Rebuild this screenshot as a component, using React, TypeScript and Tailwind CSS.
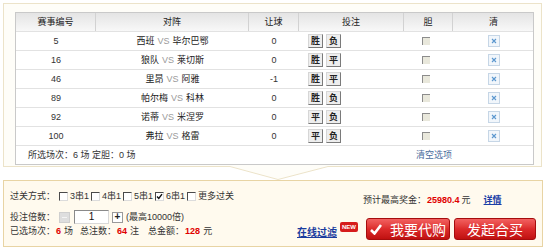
import React from "react";

const matches = [
  { id: "5", home: "西班", away: "毕尔巴鄂", rq: "0", picks: ["胜", "负"] },
  { id: "16", home: "狼队", away: "莱切斯", rq: "0", picks: ["胜", "平"] },
  { id: "46", home: "里昂", away: "阿雅", rq: "-1", picks: ["胜", "平"] },
  { id: "89", home: "帕尔梅", away: "科林", rq: "0", picks: ["胜", "负"] },
  { id: "92", home: "诺蒂", away: "米涅罗", rq: "0", picks: ["平", "负"] },
  { id: "100", home: "弗拉", away: "格雷", rq: "0", picks: ["平", "负"] },
];

const cols = "grid grid-cols-[80px_153px_50px_105px_49px_81px]";

// old style sunken checkbox
const OldCheck = ({ checked = false }: { checked?: boolean }) => (
  <span className="inline-flex w-[9px] h-[9px] items-center justify-center bg-white border border-t-[#4a4a4a] border-l-[#4a4a4a] border-r-[#dcdcdc] border-b-[#dcdcdc]">
    {checked && (
      <svg width="7" height="7" viewBox="0 0 7 7">
        <path d="M1 3.5 L2.8 5.5 L6 1.2" fill="none" stroke="#111" strokeWidth="1.4" />
      </svg>
    )}
  </span>
);

const App = () => {
  return (
    <div className="w-[550px] h-[248px] bg-white overflow-hidden pt-[3px] text-[9px] leading-[12px] text-[#333] font-['Liberation_Sans','Noto_Sans_CJK_SC',sans-serif]">
      {/* top panel */}
      <div className="ml-[3px] w-[539px] h-[163px] border border-b-0 border-[#ece3c9] bg-[#fefdf8] pl-[11px] pt-[8px]">
        <div className="w-[519px] border border-[#c9c9c9] bg-white">
          {/* header */}
          <div className={`${cols} h-[18px] bg-linear-to-b from-[#e4e4e4] to-[#f8f8f8] text-[#222]`}>
            {["赛事编号", "对阵", "让球", "投注", "胆", "清"].map((h, i) => (
              <div
                key={h}
                className={`flex items-center justify-center ${i < 5 ? "border-r border-[#d2d2d2]" : ""}`}
              >
                {h}
              </div>
            ))}
          </div>

          {/* rows */}
          {matches.map((m) => (
            <div key={m.id} className={`${cols} h-[19px] border-t border-[#e2e2e2]`}>
              <div className="flex items-center justify-center">{m.id}</div>
              <div className="flex items-center justify-center gap-[3px] text-[#222]">
                <span>{m.home}</span>
                <span className="text-[#9a9a9a]">VS</span>
                <span>{m.away}</span>
              </div>
              <div className="flex items-center justify-center">{m.rq}</div>
              <div className="flex items-center gap-[3px] pl-[9px]">
                {m.picks.map((p) => (
                  <span
                    key={p}
                    className="w-[15px] h-[14px] flex items-center justify-center bg-[#eeeeee] border border-t-[#d6d6d6] border-l-[#d6d6d6] border-r-[#7a7a7a] border-b-[#7a7a7a] text-[#222] font-bold"
                  >
                    {p}
                  </span>
                ))}
              </div>
              <div className="flex items-center pl-[18px]">
                <span className="w-[8px] h-[8px] bg-[#e9e8dc] border-t border-l border-[#8c8c8c]" />
              </div>
              <div className="flex items-center justify-center">
                <span className="w-[12px] h-[12px] flex items-center justify-center bg-[#f1f6fb] border border-[#c6d6e6]">
                  <svg width="6" height="6" viewBox="0 0 6 6">
                    <path d="M1 1 L5 5 M5 1 L1 5" stroke="#5b97cf" strokeWidth="1.1" />
                  </svg>
                </span>
              </div>
            </div>
          ))}

          {/* summary */}
          <div className="flex items-center h-[19px] border-t border-[#e2e2e2]">
            <div className="w-[400px] pl-[12px] text-[#333]">所选场次：6 场 定胆：0 场</div>
            <span className="text-[#4a6c9c]">清空选项</span>
          </div>
        </div>
      </div>

      {/* pointer joining the panels */}
      <svg width="539" height="14" viewBox="0 0 539 14" className="ml-[3px] block">
        <polygon points="227,0 275,13.5 325,0" fill="#fefdf8" />
        <polyline
          points="0,0.5 227,0.5 275,13.5 325,0.5 539,0.5"
          fill="none"
          stroke="#ece3c9"
          strokeWidth="1"
        />
      </svg>

      {/* bottom box */}
      <div className="ml-[3px] w-[540px] h-[67px] border border-[#e8d4a4] bg-[#fffaee] flex">
        <div className="w-[293px] pl-[6px] pt-[9px]">
          <div className="flex items-center h-[12px] gap-[1px]">
            <span className="mr-[3px]">过关方式：</span>
            <OldCheck />
            <span className="w-[20px] ml-[1px]">3串1</span>
            <OldCheck />
            <span className="w-[20px] ml-[1px]">4串1</span>
            <OldCheck />
            <span className="w-[20px] ml-[1px]">5串1</span>
            <OldCheck checked />
            <span className="w-[20px] ml-[1px]">6串1</span>
            <OldCheck />
            <span className="ml-[1px]">更多过关</span>
          </div>

          <div className="flex items-center h-[14px] mt-[8px]">
            <span className="mr-[4px]">投注倍数：</span>
            <span className="w-[11px] h-[11px] flex items-center justify-center bg-[#dedede] border border-[#cfcfcf]">
              <span className="w-[5px] h-[1px] bg-[#f4f4f4]" />
            </span>
            <span className="ml-[4px] w-[35px] h-[14px] flex items-center justify-center bg-white border border-t-[#8a8a8a] border-l-[#8a8a8a] border-r-[#d8d8d8] border-b-[#d8d8d8] text-[10px] text-[#111]">
              1
            </span>
            <span className="ml-[3px] w-[11px] h-[11px] flex items-center justify-center bg-white border border-[#9a9a9a] text-[#222] font-bold text-[10px] leading-none">
              +
            </span>
            <span className="ml-[3px]">(最高10000倍)</span>
          </div>

          <div className="flex items-center h-[12px] mt-[1px]">
            <span>已选场次：</span>
            <span className="text-[#e00000] font-bold ml-[1px]">6</span>
            <span className="ml-[3px]">场</span>
            <span className="ml-[7px]">总注数：</span>
            <span className="text-[#e00000] font-bold ml-[1px]">64</span>
            <span className="ml-[3px]">注</span>
            <span className="ml-[9px]">总金额：</span>
            <span className="text-[#e00000] font-bold ml-[1px]">128</span>
            <span className="ml-[3px]">元</span>
          </div>
        </div>

        <div className="flex-1 pt-[13px]">
          <div className="flex items-center h-[12px] pl-[66px]">
            <span>预计最高奖金：</span>
            <span className="text-[#e00000] font-bold ml-[1px]">25980.4</span>
            <span className="ml-[2px]">元</span>
            <span className="ml-[13px] font-bold text-[#1b3ea6] underline">详情</span>
          </div>

          <div className="flex items-center h-[22px] mt-[12px]">
            <span className="mt-[8px] text-[10px] font-bold text-[#1a3c9e] underline">在线过滤</span>
            <span className="relative ml-[3px] -mt-[4px] h-[10px] px-[2px] flex items-center rounded-[2px] bg-[#d61c1c] text-white text-[6px] font-bold leading-none">
              NEW
            </span>
            <button className="ml-[8px] w-[84px] h-[22px] flex items-center justify-center gap-[8px] rounded-[3px] border border-[#a50d0d] bg-linear-to-b from-[#f26060] via-[#dc2a2a] to-[#c01010] text-white text-[14px] leading-none font-['Noto_Sans_CJK_SC',sans-serif]">
              <svg width="12" height="11" viewBox="0 0 12 11">
                <path d="M1 6 L4.5 9.5 L11 1" fill="none" stroke="#fff" strokeWidth="2.6" />
              </svg>
              <span>我要代购</span>
            </button>
            <button className="ml-[4px] w-[82px] h-[22px] flex items-center justify-center rounded-[3px] border border-[#a50d0d] bg-linear-to-b from-[#f26060] via-[#dc2a2a] to-[#c01010] text-white text-[14px] leading-none font-['Noto_Sans_CJK_SC',sans-serif]">
              发起合买
            </button>
          </div>
        </div>
      </div>
    </div>
  );
};

export default App;
